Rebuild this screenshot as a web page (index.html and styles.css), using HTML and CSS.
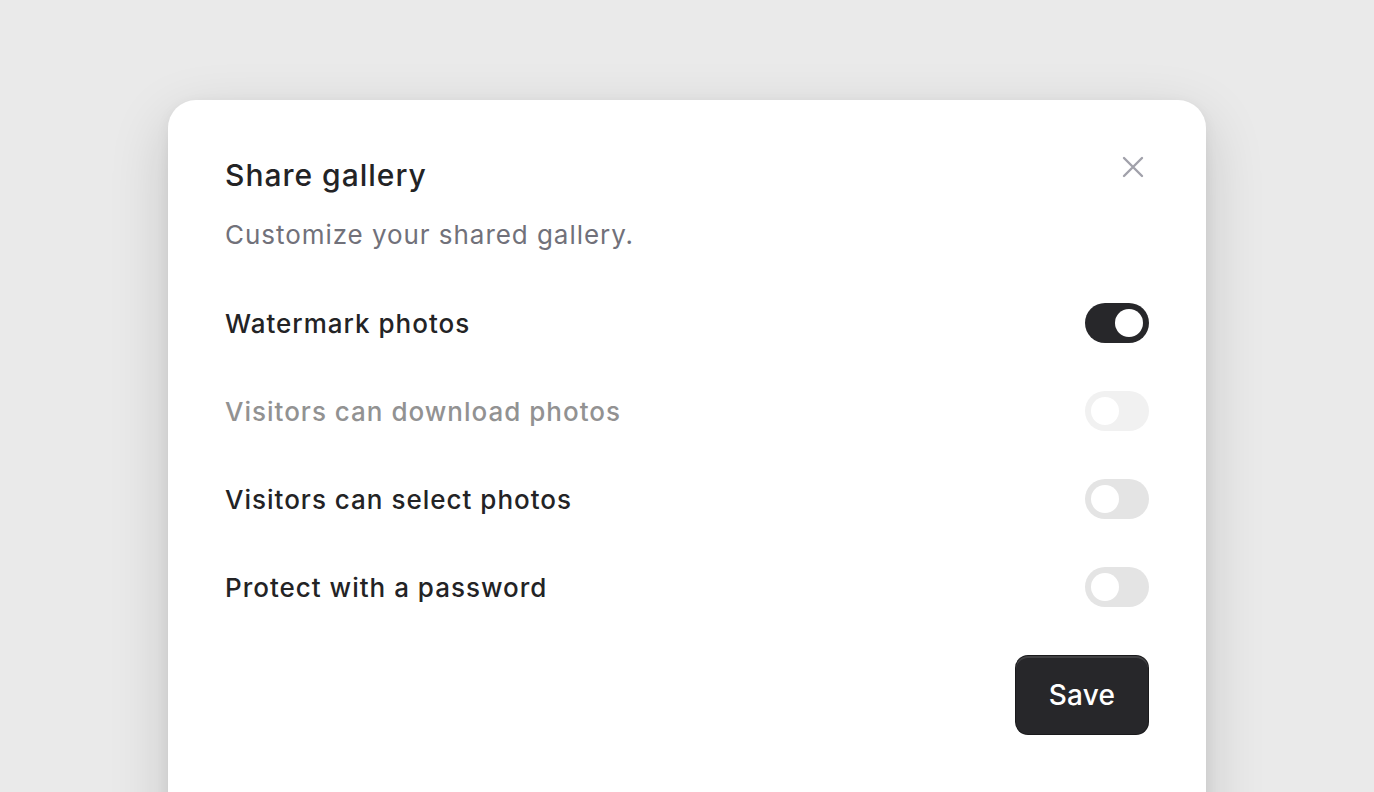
FILE: index.html
```html
<!DOCTYPE html>
<html>
<head>
<meta charset="utf-8">
<link rel="stylesheet" href="styles.css">
</head>
<body>
<div class="dialog">
  <button class="close" aria-label="Close">
    <svg width="22" height="22" viewBox="0 0 22 22"><path d="M2 2L20 20M20 2L2 20" stroke="#a1a1aa" stroke-width="2.4" stroke-linecap="round"/></svg>
  </button>
  <h1 class="title">Share gallery</h1>
  <p class="subtitle">Customize your shared gallery.</p>
  <div class="rows">
    <div class="row">
      <span class="label">Watermark photos</span>
      <span class="switch on"><span class="thumb"></span></span>
    </div>
    <div class="row disabled">
      <span class="label">Visitors can download photos</span>
      <span class="switch"><span class="thumb"></span></span>
    </div>
    <div class="row">
      <span class="label">Visitors can select photos</span>
      <span class="switch"><span class="thumb"></span></span>
    </div>
    <div class="row">
      <span class="label">Protect with a password</span>
      <span class="switch"><span class="thumb"></span></span>
    </div>
  </div>
  <div class="footer">
    <button class="save">Save</button>
  </div>
</div>
</body>
</html>
```
FILE: styles.css
```css
* { box-sizing: border-box; }
html, body { margin: 0; padding: 0; }
body {
  background: #eaeaea;
  font-family: Inter, "Noto Sans", sans-serif;
  height: 792px;
  overflow: hidden;
  padding: 100px 168px 0;
}
.dialog {
  position: relative;
  background: #fff;
  border-radius: 28px;
  padding: 55px 57px 80px;
  box-shadow: 0 20px 60px rgba(0,0,0,0.16), 0 4px 14px rgba(0,0,0,0.06);
  height: 760px;
}
.close {
  position: absolute;
  top: 56px;
  right: 62px;
  width: 22px;
  height: 22px;
  padding: 0;
  border: 0;
  background: none;
  display: flex;
}
.title {
  margin: 0;
  font-size: 30px;
  line-height: 40px;
  font-weight: 500;
  color: #232325;
  letter-spacing: 1px;
}
.subtitle {
  margin: 22px 0 0;
  font-size: 26px;
  line-height: 36px;
  color: #71717a;
  letter-spacing: 0.95px;
}
.rows {
  margin-top: 50px;
  display: flex;
  flex-direction: column;
  gap: 48px;
}
.row {
  display: flex;
  align-items: center;
  justify-content: space-between;
  height: 40px;
}
.label {
  font-size: 26px;
  font-weight: 500;
  color: #232325;
  letter-spacing: 1px;
}
.row.disabled .label { color: #929292; }
.switch {
  width: 64px;
  height: 40px;
  border-radius: 20px;
  background: #e4e4e4;
  padding: 6px;
  display: flex;
}
.switch .thumb {
  width: 28px;
  height: 28px;
  border-radius: 50%;
  background: #fff;
}
.switch.on { background: #27272a; justify-content: flex-end; }
.row.disabled .switch { background: #f1f1f1; }
.footer {
  margin-top: 49px;
  display: flex;
  justify-content: flex-end;
  padding-right: 1px;
}
.save {
  width: 132px;
  height: 78px;
  border-radius: 12px;
  border: 0;
  background: #27272a;
  color: #fff;
  font-family: Inter, sans-serif;
  font-size: 28px;
  font-weight: 500;
  letter-spacing: 0.2px;
  box-shadow: inset 0 2px 0 rgba(255,255,255,0.12), 0 0 0 1px #1a1a1c;
}
```
